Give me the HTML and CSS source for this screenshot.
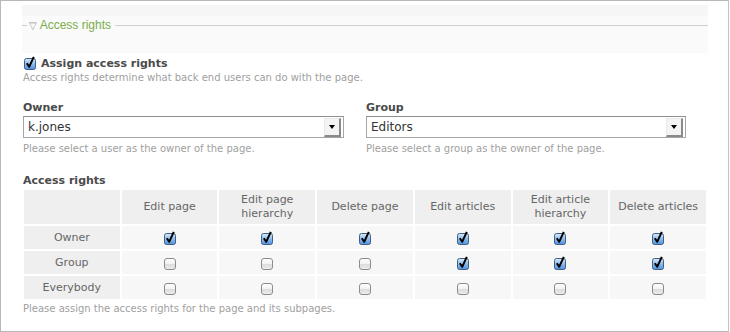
FILE: index.html
```html
<!DOCTYPE html>
<html lang="en">

<head>
    <meta charset="UTF-8">
    <title>Access rights</title>
    <link rel="stylesheet" href="styles.css">
</head>

<body>
    <svg class="defs" width="0" height="0">
        <defs>
            <linearGradient id="blue" x1="0" y1="0" x2="0" y2="1">
                <stop offset="0" stop-color="#dcebfa" />
                <stop offset="0.5" stop-color="#8dbbec" />
                <stop offset="1" stop-color="#4f90dc" />
            </linearGradient>
            <linearGradient id="grey" x1="0" y1="0" x2="0" y2="1">
                <stop offset="0" stop-color="#ffffff" />
                <stop offset="0.5" stop-color="#f1f1f1" />
                <stop offset="0.55" stop-color="#dcdcdc" />
                <stop offset="1" stop-color="#eeeeee" />
            </linearGradient>
            <symbol id="on" viewBox="0 0 14 14">
                <rect x="1.5" y="2.5" width="11" height="11" rx="2" fill="url(#blue)" stroke="#3f5f86" />
                <path d="M3.8 7.2 L6.2 10.8 L10.8 0.8" fill="none" stroke="#000" stroke-width="2" stroke-linejoin="round" />
            </symbol>
            <symbol id="off" viewBox="0 0 14 14">
                <rect x="1.5" y="2.5" width="11" height="11" rx="2.5" fill="url(#grey)" stroke="#8c8c8c" />
            </symbol>
        </defs>
    </svg>

    <div class="panel">
        <div class="fs-head">
            <div class="legend">
                <span class="rule-start"></span>
                <span class="legend-text"><span class="toggle">&#9661;</span> Access rights</span>
                <span class="rule"></span>
            </div>
        </div>

        <div class="content">
            <div class="check-row">
                <svg class="cb"><use href="#on" /></svg>
                <label>Assign access rights</label>
            </div>
            <p class="help">Access rights determine what back end users can do with the page.</p>

            <div class="fields">
                <div class="field">
                    <h3>Owner</h3>
                    <div class="select">
                        <span>k.jones</span>
                        <span class="arrow"><i></i></span>
                    </div>
                    <p class="help">Please select a user as the owner of the page.</p>
                </div>
                <div class="field">
                    <h3>Group</h3>
                    <div class="select">
                        <span>Editors</span>
                        <span class="arrow"><i></i></span>
                    </div>
                    <p class="help">Please select a group as the owner of the page.</p>
                </div>
            </div>

            <h3 class="table-title">Access rights</h3>
            <table class="rights">
                <tr>
                    <th></th>
                    <th>Edit page</th>
                    <th>Edit page<br>hierarchy</th>
                    <th>Delete page</th>
                    <th>Edit articles</th>
                    <th>Edit article<br>hierarchy</th>
                    <th>Delete articles</th>
                </tr>
                <tr>
                    <td class="who">Owner</td>
                    <td><svg class="cb"><use href="#on" /></svg></td>
                    <td><svg class="cb"><use href="#on" /></svg></td>
                    <td><svg class="cb"><use href="#on" /></svg></td>
                    <td><svg class="cb"><use href="#on" /></svg></td>
                    <td><svg class="cb"><use href="#on" /></svg></td>
                    <td><svg class="cb"><use href="#on" /></svg></td>
                </tr>
                <tr>
                    <td class="who">Group</td>
                    <td><svg class="cb"><use href="#off" /></svg></td>
                    <td><svg class="cb"><use href="#off" /></svg></td>
                    <td><svg class="cb"><use href="#off" /></svg></td>
                    <td><svg class="cb"><use href="#on" /></svg></td>
                    <td><svg class="cb"><use href="#on" /></svg></td>
                    <td><svg class="cb"><use href="#on" /></svg></td>
                </tr>
                <tr>
                    <td class="who">Everybody</td>
                    <td><svg class="cb"><use href="#off" /></svg></td>
                    <td><svg class="cb"><use href="#off" /></svg></td>
                    <td><svg class="cb"><use href="#off" /></svg></td>
                    <td><svg class="cb"><use href="#off" /></svg></td>
                    <td><svg class="cb"><use href="#off" /></svg></td>
                    <td><svg class="cb"><use href="#off" /></svg></td>
                </tr>
            </table>
            <p class="help">Please assign the access rights for the page and its subpages.</p>
        </div>
    </div>
</body>

</html>
```

FILE: styles.css
```css
body {
    margin: 0;
    background: #fff;
    font-family: "DejaVu Sans", Verdana, sans-serif;
    font-size: 11px;
    color: #444;
}

.defs {
    position: absolute;
}

.panel {
    width: 727px;
    height: 330px;
    border: 1px solid #b8b8b8;
    border-right-color: #c4c4c4;
    box-sizing: content-box;
}

.fs-head {
    margin: 4px 0 0 21px;
    width: 686px;
    height: 48px;
    background: linear-gradient(#f6f6f6 0, #f6f6f6 11px, #fafafa 11px, #fafafa 100%);
}

.legend {
    display: flex;
    align-items: center;
    padding-top: 13px;
    height: 14px;
}

.rule-start {
    width: 5px;
    border-top: 1px solid #cfcfcf;
}

.rule {
    flex: 1;
    border-top: 1px solid #cfcfcf;
}

.legend-text {
    padding: 0 4px 0 2px;
    font-family: "Liberation Sans", Arial, sans-serif;
    font-size: 12px;
    color: #7aad4a;
}

.toggle {
    color: #999;
    font-size: 10px;
}

.content {
    padding-left: 22px;
}

.cb {
    width: 14px;
    height: 14px;
    vertical-align: middle;
}

.check-row {
    display: flex;
    align-items: center;
    gap: 4px;
    margin-top: 2px;
    height: 16px;
}

.check-row label {
    font-weight: bold;
    font-size: 11px;
    color: #4a4a4a;
}

.help {
    margin: 0;
    color: #a0a0a0;
    font-size: 10px;
    line-height: 14px;
}

h3 {
    margin: 0;
    font-size: 11px;
    font-weight: bold;
    color: #4a4a4a;
    line-height: 14px;
}

.fields {
    display: grid;
    grid-template-columns: 321px 320px;
    column-gap: 22px;
    margin-top: 16px;
}

.select {
    display: flex;
    align-items: center;
    justify-content: space-between;
    height: 20px;
    margin: 1px 0 4px;
    border: 1px solid #a6a6a6;
    border-top-color: #8e8e8e;
    background: #fff;
    font-size: 12px;
    color: #333;
    padding-left: 4px;
}

.arrow {
    display: flex;
    align-items: center;
    justify-content: center;
    width: 14px;
    height: 16px;
    margin-right: 2px;
    background: #f4f4f4;
    border: 1px solid #e8e8e8;
    border-right: 2px solid #8a8a8a;
    border-bottom: 2px solid #8a8a8a;
}

.arrow i {
    width: 0;
    height: 0;
    border-left: 3px solid transparent;
    border-right: 3px solid transparent;
    border-top: 4px solid #000;
}

.table-title {
    margin-top: 18px;
}

.rights {
    width: 686px;
    margin-left: -1px;
    border-spacing: 2px;
    table-layout: fixed;
    color: #666;
    font-size: 11px;
}

.rights th,
.rights td {
    text-align: center;
    font-weight: normal;
    padding: 0;
}

.rights th {
    height: 34px;
    line-height: 14px;
    background: #efefef;
}

.rights td {
    height: 23px;
    background: #f7f7f7;
}

.rights td.who {
    background: #efefef;
}

.rights + .help {
    margin-top: 1px;
}
```
